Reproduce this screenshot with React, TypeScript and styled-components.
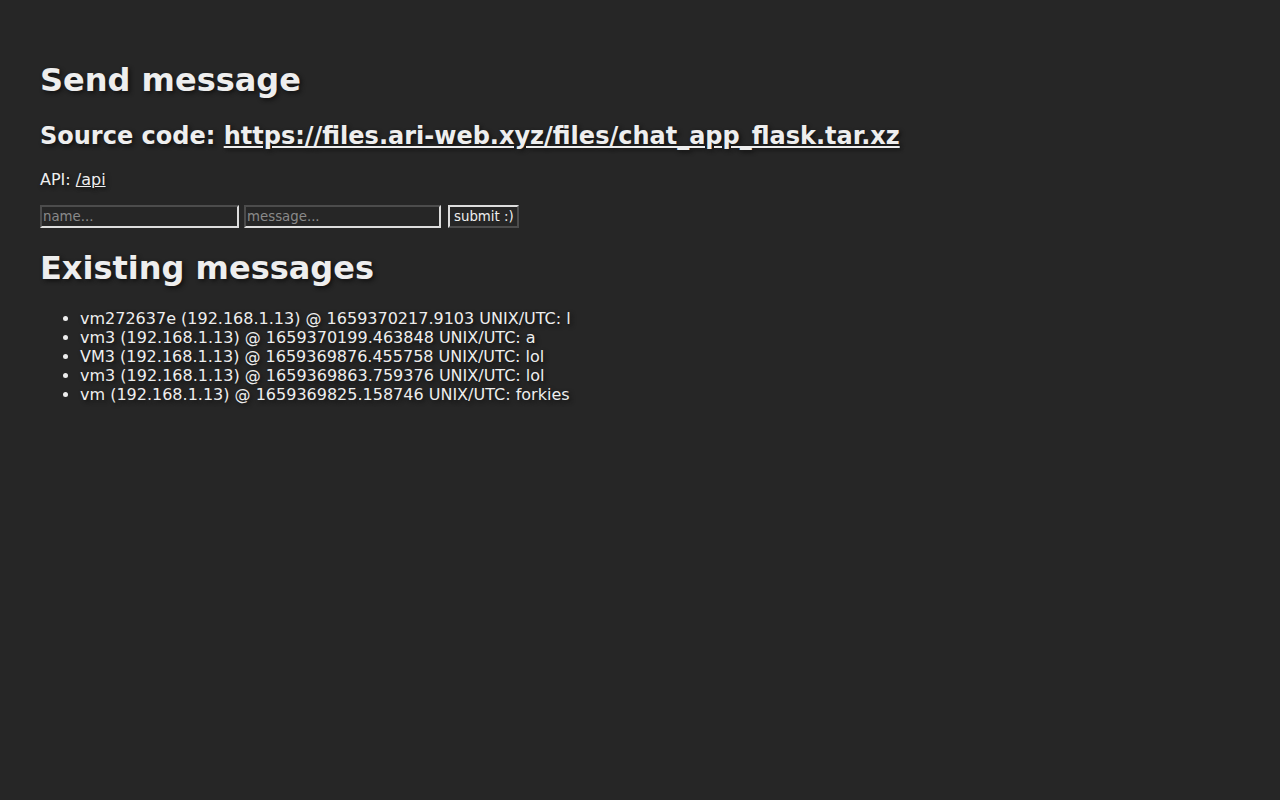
import React from "react";
import styled, { createGlobalStyle } from "styled-components";

const Global = createGlobalStyle`
  html, body { background: #262626; }
  body {
    margin: 0;
    padding: 40px;
    color: #eeeeee;
    font-family: "DejaVu Sans", sans-serif;
    font-size: 16px;
    text-shadow: 2px 2px 4px #111111;
  }
`;

const Page = styled.main`
  display: block;
`;

const Title = styled.h1`
  font-size: 32px;
  font-weight: bold;
  margin: 21.44px 0;
`;

const Sub = styled.h2`
  font-size: 24px;
  font-weight: bold;
  margin: 22.44px 0 19.92px;
`;

const Link = styled.a`
  color: #eeeeee;
  text-decoration: underline;
`;

const Para = styled.p`
  margin: 16px 0;
`;

const Form = styled.form`
  display: flex;
  align-items: center;
  gap: 5px;
  margin: 0;
`;

const Field = styled.input<{ $w: number }>`
  width: ${(p) => p.$w}px;
  height: 23px;
  box-sizing: border-box;
  background: #262626;
  color: #eeeeee;
  border: 2px inset #dddddd;
  border-top-color: #a0a0a0;
  border-left-color: #a0a0a0;
  font-family: "DejaVu Sans", sans-serif;
  font-size: 13.33px;
  padding: 1px 1px;
  &::placeholder { color: #8a8a8a; }
`;

const Button = styled.button`
  margin-left: 2px;
  height: 23px;
  width: 71px;
  box-sizing: border-box;
  background: #262626;
  color: #eeeeee;
  border: 2px outset #dddddd;
  border-bottom-color: #a0a0a0;
  border-right-color: #a0a0a0;
  font-family: "DejaVu Sans", sans-serif;
  font-size: 13.33px;
  padding: 1px 4px;
  white-space: nowrap;
`;

const List = styled.ul`
  margin: 16px 0;
  padding-left: 40px;
  line-height: 19px;
`;

const messages = [
  "vm272637e (192.168.1.13) @ 1659370217.9103 UNIX/UTC: l",
  "vm3 (192.168.1.13) @ 1659370199.463848 UNIX/UTC: a",
  "VM3 (192.168.1.13) @ 1659369876.455758 UNIX/UTC: lol",
  "vm3 (192.168.1.13) @ 1659369863.759376 UNIX/UTC: lol",
  "vm (192.168.1.13) @ 1659369825.158746 UNIX/UTC: forkies",
];

export default function App() {
  return (
    <>
      <Global />
      <Page>
        <Title>Send message</Title>
        <Sub>
          Source code: <Link href="#">https://files.ari-web.xyz/files/chat_app_flask.tar.xz</Link>
        </Sub>
        <Para>
          API: <Link href="#">/api</Link>
        </Para>
        <Form onSubmit={(e) => e.preventDefault()}>
          <Field $w={199} placeholder="name..." />
          <Field $w={197} placeholder="message..." />
          <Button type="submit">submit :)</Button>
        </Form>
        <Title>Existing messages</Title>
        <List>
          {messages.map((m) => (
            <li key={m}>{m}</li>
          ))}
        </List>
      </Page>
    </>
  );
}
